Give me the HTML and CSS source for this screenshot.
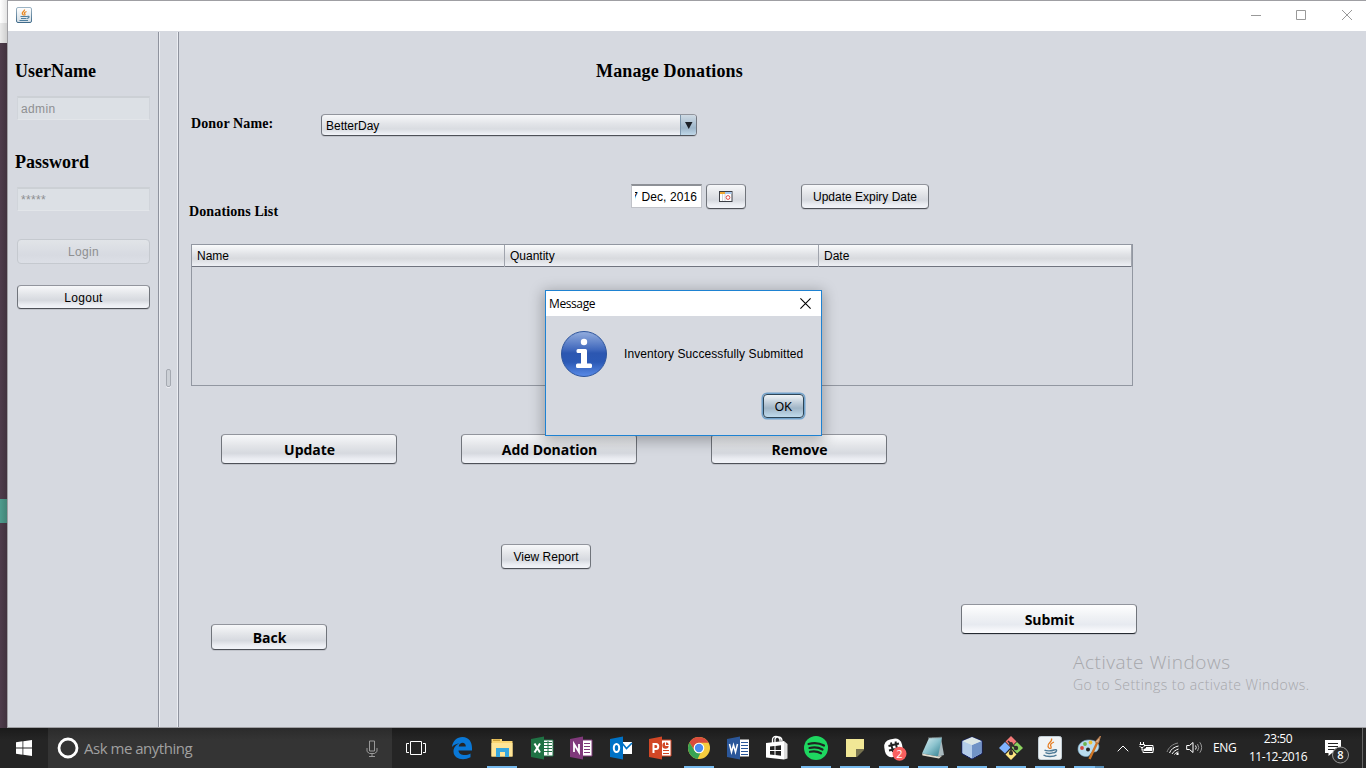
FILE: index.html
```html
<!DOCTYPE html>
<html lang="en">
<head>
<meta charset="utf-8">
<title>Manage Donations</title>
<link rel="stylesheet" href="styles.css">
</head>
<body>
<div class="desktop">
  <div class="behind"><i class="behind-top"></i><i class="behind-bar"></i><i class="behind-body"></i><i class="behind-accent"></i><i class="behind-body2"></i></div>
  <div class="window">
    <header class="titlebar">
      <svg class="java-small" width="16" height="16" viewBox="0 0 16 16"><defs><linearGradient id="jb" x2="0" y2="1"><stop stop-color="#9db4c4"/><stop offset="1" stop-color="#3f6a8a"/></linearGradient><linearGradient id="jf" x2="0" y2="1"><stop stop-color="#fff"/><stop offset="1" stop-color="#d3dde4"/></linearGradient></defs><rect x=".5" y=".5" width="15" height="15" rx="1.5" fill="url(#jf)" stroke="url(#jb)"/><path d="M8.5 2.5C9 4 6 5 6.300 6.500C6.500 7.500 7.500 7.500 7.500 8.500M10.500 4.500C8.500 5.200 8 6 8.800 7C9.200 7.500 9 8 8.500 8.500" fill="none" stroke="#e98a25" stroke-width="1.300"/><path d="M4.500 9.500H11M5 11.500H10.500M11 9.500C14 8.500 13.500 11 11 11.500M3.500 13.500H12" fill="none" stroke="#4f7f9f" stroke-width="1.200"/></svg>
      <div class="controls">
        <svg width="10" height="10" viewBox="0 0 10 10"><path d="M0 5.500H10"/></svg>
        <svg width="10" height="10" viewBox="0 0 10 10"><path d="M.5 .5H9.500V9.500H.5Z"/></svg>
        <svg width="10" height="10" viewBox="0 0 10 10"><path d="M0 0L10 10M10 0L0 10"/></svg>
      </div>
    </header>
    <div class="split">
      <aside class="sidebar">
        <label class="side-label">UserName</label>
        <div class="field user">admin</div>
        <label class="side-label pw">Password</label>
        <div class="field pass">*****</div>
        <div class="btn disabled login">Login</div>
        <div class="btn logout">Logout</div>
      </aside>
      <div class="divider"><i class="grip"></i></div>
      <main class="main">
        <h1 class="title">Manage Donations</h1>
        <div class="donor">
          <span class="form-label donor-label">Donor Name:</span>
          <div class="combo"><span class="combo-text">BetterDay</span><span class="combo-arrow"><svg width="8" height="7" viewBox="0 0 8 7"><path d="M0 0H7.500L3.750 7Z" fill="#1c2128"/></svg></span></div>
        </div>
        <div class="dates">
          <span class="form-label list-label">Donations List</span>
          <div class="date"><span>7 Dec, 2016</span></div>
          <div class="btn cal"><svg width="14" height="12" viewBox="0 0 14 12"><rect x=".5" y=".5" width="12.500" height="10" fill="#fff" stroke="#3c3f46"/><path d="M1 1H6V3H1Z" fill="#f0a830"/><path d="M6 1H12.500V3H6Z" fill="#a8c8ee"/><path d="M3.500 3V10M6 3V10" stroke="#d2d4da" fill="none"/><circle cx="9" cy="6.500" r="1.900" fill="#fff" stroke="#e44b48"/></svg></div>
          <div class="btn expiry">Update Expiry Date</div>
        </div>
        <div class="table"><div class="thead"><span>Name</span><span>Quantity</span><span>Date</span></div></div>
        <div class="actions">
          <div class="btn big b-update"><span>Update</span></div>
          <div class="btn big b-add"><span>Add Donation</span></div>
          <div class="btn big b-remove"><span>Remove</span></div>
        </div>
        <div class="btn report">View Report</div>
        <div class="bottom">
          <div class="btn big back"><span>Back</span></div>
          <div class="btn big submit"><span>Submit</span></div>
        </div>
      </main>
    </div>
  </div>
</div>

<div class="watermark"><div class="wm-title">Activate Windows</div><div class="wm-text">Go to Settings to activate Windows.</div></div>

<section class="dialog">
  <div class="dialog-bar"><span class="dialog-title">Message</span><svg width="11" height="11" viewBox="0 0 11 11"><path d="M.4 .4L10.600 10.600M10.600 .4L.4 10.600" stroke="#000" stroke-width="1.100"/></svg></div>
  <div class="dialog-body">
    <svg width="46" height="46" viewBox="0 0 46 46"><defs><linearGradient id="ig" x2="0" y2="1"><stop stop-color="#94aede"/><stop offset=".4" stop-color="#4169bd"/><stop offset=".48" stop-color="#2c57b1"/><stop offset=".68" stop-color="#2b59b5"/><stop offset="1" stop-color="#5a8be8"/></linearGradient></defs><circle cx="23" cy="23" r="22.500" fill="url(#ig)" stroke="#2e559c"/><circle cx="23" cy="11" r="3.200" fill="#fff"/><path d="M17 18H24.500Q26 18 26 19.500V32.500H29.500Q31 32.500 31 34V35.500Q31 37 29.500 37H16.500Q15 37 15 35.500V34Q15 32.500 16.500 32.500H20V22H17Q15.500 22 15.500 20.500V19.500Q15.500 18 17 18Z" fill="#fff"/></svg>
    <p class="dialog-msg">Inventory Successfully Submitted</p>
  </div>
  <div class="btn ok">OK</div>
</section>

<footer class="taskbar">
  <div class="start"><svg width="16" height="16" viewBox="0 0 16 16"><path d="M0 2.300L6.500 1.300V7.500H0ZM7.300 1.200L16 0V7.500H7.300ZM0 8.400H6.500V14.700L0 13.700ZM7.300 8.400H16V16L7.300 14.800Z" fill="#fff"/></svg></div>
  <div class="search"><svg width="22" height="22" viewBox="0 0 22 22"><circle cx="11" cy="11" r="9" fill="none" stroke="#fff" stroke-width="2.800"/></svg><span class="search-text">Ask me anything</span><svg class="mic" width="12" height="17" viewBox="0 0 12 17"><path d="M3.500 1H8.500V11H3.500ZM1 8V11.500L3.500 13.500H8.500L11 11.500V8M6 13.500V16.500M3 16.500H9" fill="none" stroke="#999"/></svg></div>
  <div class="taskview"><svg width="20" height="14" viewBox="0 0 20 14"><path d="M4.500 .5H15.500V13.500H4.500ZM3 2.500H.5V11.500H3M17 2.500H19.500V11.500H17" fill="none" stroke="#fff"/></svg></div>
  <div class="apps">
    <div class="app"><svg viewBox="0 0 26 26"><path d="M2 12C2.500 6 7 2 12.500 2C19 2 22 7 22 13V15.500H8.500C9 21 16.500 21 20.500 18.500V22.300C12.500 26.500 3.500 23.500 3.500 16.500C3.500 12.500 6 9.500 9.500 8.500C6.500 8.500 3.800 10 2 12ZM8.700 11.500H15.800C16 6.500 9.500 6.500 8.700 11.500Z" fill="#0a78d6"/></svg></div>
    <div class="app open gap"><svg viewBox="0 0 26 26"><path d="M2.500 4H13V6H23.500V21.500H2.500Z" fill="#fbd672"/><path d="M4 4.500H11V6H4Z" fill="#c99e39"/><path d="M2.500 8H23.500V21.500H2.500Z" fill="#ffe597"/><path d="M7 13H20V22H16V17H11V22H7Z" fill="#37a7df"/></svg></div>
    <div class="app"><svg viewBox="0 0 26 26"><path d="M13 5H24V21H13Z" fill="#fff" stroke="#217346"/><path d="M15 7.500H23M15 10.500H23M15 13.500H23M15 16.500H23M19 6V20" stroke="#217346"/><path d="M2 4L15 1.500V24.500L2 22Z" fill="#1f7244"/><path d="M5.500 8.500L11 17.500M11 8.500L5.500 17.500" stroke="#fff" stroke-width="2"/></svg></div>
    <div class="app gap"><svg viewBox="0 0 26 26"><path d="M14 5H24V21H14Z" fill="#fff" stroke="#80397b"/><path d="M16 8.500H22M16 11.500H22M16 14.500H22M16 17.500H22" stroke="#80397b"/><path d="M2 4L15 1.500V24.500L2 22Z" fill="#80397b"/><path d="M6 17V9L11 17V9" fill="none" stroke="#fff" stroke-width="1.800"/></svg></div>
    <div class="app"><svg viewBox="0 0 26 26"><path d="M14 7H24V19H14Z" fill="#fff"/><path d="M14 8L18.500 13.500L24 8" fill="none" stroke="#0072c6" stroke-width="1.600"/><path d="M2 4L15 1.500V24.500L2 22Z" fill="#0072c6"/><ellipse cx="8.500" cy="13" rx="2.700" ry="4" fill="none" stroke="#fff" stroke-width="2"/></svg></div>
    <div class="app"><svg viewBox="0 0 26 26"><path d="M14 5H24V21H14Z" fill="#fff" stroke="#d24726"/><circle cx="18.500" cy="10.500" r="3.200" fill="#d24726"/><path d="M18.500 10.500V7M18.500 10.500H22" stroke="#fff"/><path d="M16 15.500H22M16 18.500H22" stroke="#d24726"/><path d="M2 4L15 1.500V24.500L2 22Z" fill="#d24726"/><path d="M6.500 18V9H9C12 9 12 14 9 14H6.500" fill="none" stroke="#fff" stroke-width="2"/></svg></div>
    <div class="app open"><svg viewBox="0 0 26 26"><circle cx="13" cy="13" r="11" fill="#f5cc3e"/><path d="M3.500 7.500A11 11 0 0 1 22.600 7.700H13A5.300 5.300 0 0 0 8.400 15.600Z" fill="#d94c3d"/><path d="M3.500 7.500L8.400 15.600A5.300 5.300 0 0 0 14.500 18L11.500 23.900A11 11 0 0 1 3.500 7.500Z" fill="#37a254"/><circle cx="13" cy="13" r="5.300" fill="#fff"/><circle cx="13" cy="13" r="4.200" fill="#4a8bf0"/></svg></div>
    <div class="app"><svg viewBox="0 0 26 26"><path d="M14 4.500H24V21.500H14Z" fill="#fff"/><path d="M16 7.500H23M16 10.500H23M16 13.500H23M16 16.500H23M16 19.500H23" stroke="#2b579a"/><path d="M2 4L15 1.500V24.500L2 22Z" fill="#2b579a"/><path d="M4.500 9L6.500 17L8.500 10L10.500 17L12.500 9" fill="none" stroke="#fff" stroke-width="1.500"/></svg></div>
    <div class="app"><svg viewBox="0 0 26 26"><path d="M8.500 8V4.500C8.500 .5 15 .5 16 4.500V6.500M11 7V4C12 1 18 1 18 6" fill="none" stroke="#fff" stroke-width="1.300"/><path d="M2 8L20 6V24.500L2 22.500Z" fill="#fff"/><path d="M20 6L23.500 9V23.500L20 24.500Z" fill="#ddd"/><path d="M6 11.500L10.500 11V15H6ZM11.500 10.900L17 10.300V15H11.500ZM6 16H10.500V20L6 19.500ZM11.500 16H17V20.800L11.500 20.100Z" fill="#222"/></svg></div>
    <div class="app open"><svg viewBox="0 0 26 26"><circle cx="13" cy="13" r="12" fill="#1ed760"/><path d="M5.500 9C10.500 7.500 16.500 8 21 10.500M6.500 13C11 11.800 15.500 12.200 19.500 14.500M7 16.800C11 15.800 14.500 16.200 18 18.300" fill="none" stroke="#202422" stroke-width="2.200" stroke-linecap="round"/></svg></div>
    <div class="app open"><svg viewBox="0 0 26 26"><path d="M4 4H22V14L14 22H4Z" fill="#f1e796"/><path d="M14 14H22V15L15 22H14Z" fill="#777350"/></svg></div>
    <div class="app open"><svg viewBox="0 0 26 26"><rect x="3.500" y="4" width="18" height="18" rx="7" fill="#fff" transform="rotate(-10 12 13)"/><path d="M10 7.500L12 17M14.500 6.500L16 14M7.500 11L18 8.500M8 15.500L15 14" stroke="#222" stroke-width="2"/><circle cx="18.500" cy="18.800" r="7" fill="#f9605f"/><text x="18.500" y="23" text-anchor="middle" class="badge-text">2</text></svg></div>
    <div class="app open"><svg viewBox="0 0 26 26"><defs><linearGradient id="np" x2="1" y2="1"><stop stop-color="#dff0f3"/><stop offset=".5" stop-color="#8cc3ce"/><stop offset="1" stop-color="#2e7c8c"/></linearGradient></defs><path d="M21 3L24 20L17 22Z" fill="#a8b8bd"/><path d="M9 3L22 2.500L18 21.500L2 18.500Z" fill="url(#np)"/><path d="M2 18.500L18 21.500L22 21L19 23.500L2.500 20.500Z" fill="#dfdccf"/><path d="M8.500 3L22 2.500" stroke="#8f9b9d" stroke-width="1.500" stroke-dasharray="1 1"/></svg></div>
    <div class="app open"><svg viewBox="0 0 26 26"><path d="M13 2L23 6V18.500L13 24L3 18.500V6Z" fill="#c8d8ed" stroke="#101e69"/><path d="M3.500 6L13 10V23.500L3.500 18Z" fill="#b4cce9"/><path d="M22.500 6L13 10V23.500L22.500 18Z" fill="#7193c6"/><path d="M3.500 6L13 2L22.500 6L13 10Z" fill="#dce6e5"/></svg></div>
    <div class="app open"><svg viewBox="0 0 26 26"><path d="M13 1L18.500 6.500L13 12L7.500 6.500Z" fill="#f37978"/><path d="M7 7L12.500 12.500L7 18.500L1 13Z" fill="#80b3ff"/><path d="M19 7L25 13L19 18.500L13.500 12.500Z" fill="#8dd35f"/><path d="M13 14L18.500 19.500L13 25L7.500 19.500Z" fill="#ffe680"/><path d="M10 6L13 9V18M13 9L18 13" fill="none" stroke="#332f2c" stroke-width="1.700"/><circle cx="13" cy="9" r="2" fill="#332f2c"/><circle cx="13" cy="18" r="2.200" fill="#332f2c"/><circle cx="18" cy="13" r="2.200" fill="#332f2c"/></svg></div>
    <div class="app open"><svg viewBox="0 0 26 26"><rect x="1.500" y="1.500" width="23" height="23" rx="2" fill="#eff3f5" stroke="#c1ccd3"/><path d="M14.500 3.500C16 7 10 8 11 11.500C11.300 12.500 12.500 13 12.500 14M17 7C13.500 8.500 13 9.500 14 11.500C14.500 12.500 14 13 13.500 14" fill="none" stroke="#e67c20" stroke-width="1.300"/><path d="M7.500 15C9 16.300 15 16 17 15M8.500 17.500C10 19 15 18.500 16.500 17.500M17 15C21 13.500 20 17.500 16.500 18M6.500 20C9 22 17 22 19.500 20" fill="none" stroke="#4b7895" stroke-width="1.400"/></svg></div>
    <div class="app open multi"><svg viewBox="0 0 26 26"><path d="M2 14C2 8 8 4.500 14 5C22 5.500 25 11 21.500 15.500C19.500 18 17 16 15 18C13.500 20 13 22 9.500 21.500C5 21 2 18 2 14Z" fill="#b9dcee" stroke="#7ba9c6" stroke-width=".6"/><circle cx="6" cy="13" r="1.900" fill="#d8473e"/><circle cx="9" cy="9" r="1.900" fill="#6cb34e"/><circle cx="14.500" cy="7.500" r="1.900" fill="#ebbf35"/><circle cx="12" cy="14.500" r="2" fill="#222"/><path d="M22 6L13.500 24" stroke="#ce7525" stroke-width="2.400"/><path d="M24.500 1L19 7L22.500 8Z" fill="#dbb08a" stroke="#ba7d4e"/></svg></div>
  </div>
  <div class="tray">
    <svg class="t-up" width="12" height="7" viewBox="0 0 12 7"><path d="M.7 6.300L6 1L11.300 6.300"/></svg>
    <svg class="t-bat" width="16" height="12" viewBox="0 0 16 12"><path d="M5.500 3.500H14V10.500H4V7"/><path d="M7 5H13V9H5V7L7 6Z" fill="#fff" stroke="none"/><path d="M14.500 5.500V8.500M1.500 0V2M4.500 0V2M.5 2.500H5.500V4L4 5.500H2L.5 4M3 5.500V8.500"/></svg>
    <svg class="t-wifi" width="13" height="13" viewBox="0 0 13 13"><path d="M1 10C2.500 5.500 6.500 2 12 1" stroke="#888"/><path d="M3.500 11C5 7 8 5 12.500 4M6 12C7.500 9.500 9.500 8 12.500 7M8.500 12.500C9.500 11 11 10 12.500 10"/><circle cx="11.500" cy="12" r="1.200" fill="#fff" stroke="none"/></svg>
    <svg class="t-vol" width="17" height="13" viewBox="0 0 17 13"><path d="M.7 4.500H3.500L7 1.500V11.500L3.500 8.500H.7ZM9.500 4.500Q11 6.500 9.500 8.500"/><path d="M11.500 3Q14 6.500 11.500 10M13.800 1.300Q17.500 6.500 13.800 11.700" stroke="#999"/></svg>
    <span class="lang">ENG</span>
    <div class="clock"><span class="time">23:50</span><span class="day">11-12-2016</span></div>
    <svg class="t-note" width="25" height="25" viewBox="0 0 25 25"><path d="M1 1H17V14H8L4.500 17V14H1Z" fill="#fff" stroke="none"/><path d="M4 4.500H14M4 7.500H14M4 10.500H11" stroke="#222"/><circle cx="16.500" cy="16" r="8" fill="#2c2c2c" stroke="#999"/><text x="16.500" y="20.300" text-anchor="middle" class="note-count">8</text></svg>
  </div>
</footer>
</body>
</html>
```
FILE: styles.css
```css
* { box-sizing: border-box; }
body { margin: 0; width: 1366px; height: 768px; overflow: hidden; display: flex; flex-direction: column; position: relative; font: 12px/15px "Liberation Sans", Arial, sans-serif; color: #000; background: #222; }
svg { display: block; flex: none; }
.desktop { height: 728px; display: flex; background: #4a3947; }
.behind { width: 7px; display: flex; flex-direction: column; }
.behind-top { height: 23px; background: linear-gradient(90deg, #fff, #e4e4e4); }
.behind-bar { height: 20px; background: linear-gradient(90deg, #ebebeb, #cfcfcf); }
.behind-body { height: 456px; background: linear-gradient(90deg, #4e3c4b, #41323e); }
.behind-accent { height: 24px; background: linear-gradient(90deg, #4e9c8e, #438477); }
.behind-body2 { flex: 1; background: linear-gradient(90deg, #4e3c4b, #41323e); }
.window { flex: 1; border: solid #9f9fa3; border-width: 1px 0 1px 1px; display: flex; flex-direction: column; background: #d6d9e0; }
.titlebar { height: 30px; background: #fff; display: flex; justify-content: space-between; padding: 6px 14px 0 8px; }
.controls { display: flex; gap: 35px; padding-top: 3px; }
.controls svg { fill: none; stroke: #999; }
.controls svg:nth-child(3) { margin-left: 1px; }
.split { flex: 1; display: flex; }
.sidebar { width: 151px; margin-top: 1px; border-right: 1px solid #8f939e; padding: 29px 7px 0; display: flex; flex-direction: column; }
.side-label { font: bold 18px/20px "Liberation Serif", "Times New Roman", serif; }
.field { height: 24px; width: 133px; margin: 15px 0 0 2px; padding: 0 3px; color: #8e8f91; background: #dce0e5; border: 1px solid #d0d4da; border-top: 2px solid #ccd0d5; border-bottom-color: #e2e5e9; line-height: 22px; letter-spacing: .35px; }
.side-label.pw { margin-top: 32px; }
.field.pass { letter-spacing: .3px; }
.btn { display: flex; align-items: center; justify-content: center; height: 25px; padding-top: 1px; border: 1px solid #70747b; border-top-color: #92959d; border-bottom-color: #4e5158; border-radius: 4px; background: linear-gradient(#f7f8fa 0%, #e2e4e8 40%, #d6d9df 65%, #ebedf2 85%, #f2f4f9 100%); box-shadow: 0 1px 0 #c1c4cb; white-space: nowrap; }
.disabled { color: #8e8f91; border-color: #c5c9cf; background: linear-gradient(#e1e4e8, #d7dae1 65%, #dcdfe6); box-shadow: none; }
.login { margin: 28px 0 0 2px; width: 133px; padding-top: 2px; letter-spacing: .3px; }
.logout { margin: 21px 0 0 2px; width: 133px; height: 24px; padding-top: 2px; letter-spacing: .3px; }
.divider { width: 20px; margin-top: 1px; border: solid #eceef3; border-width: 0 1px; border-right: 1px solid #8f939e; box-shadow: inset -1px 0 #eceef3; padding: 337px 0 0 6px; }
.grip { display: block; width: 5px; height: 18px; border: 1px solid #a5a9b1; border-radius: 2px; background: #ccd0d6; box-shadow: 0 1px #eceef3; }
.main { flex: 1; display: flex; flex-direction: column; align-items: flex-start; }
.title { margin: 30px 0 0 417px; height: 20px; font: bold 18px/20px "Liberation Serif", "Times New Roman", serif; letter-spacing: .15px; }
.donor { display: flex; height: 22px; margin: 33px 0 0 12px; }
.form-label { font: bold 14px/20px "Liberation Serif", "Times New Roman", serif; letter-spacing: .12px; }
.donor-label { width: 130px; }
.combo { width: 376px; height: 22px; display: flex; align-items: stretch; border: 1px solid #737780; border-top-color: #92959d; border-bottom-color: #4e5158; border-radius: 4px; background: linear-gradient(#f7f8fa, #e2e4e8 45%, #d9dce1 70%, #f2f4f9); box-shadow: 0 1px #c1c4cb; overflow: hidden; }
.combo-text { flex: 1; padding-left: 4px; line-height: 22px; }
.combo-arrow { width: 16px; border-left: 1px solid #7d97ad; background: linear-gradient(#cfdbe5, #a9bed0 50%, #9db5c9 65%, #c0d8e9); padding: 7px 0 0 4px; }
.dates { display: flex; height: 36px; margin: 48px 0 0 10px; }
.list-label { width: 442px; padding-top: 18px; }
.date { width: 71px; height: 24px; border: 1px solid #c0c2c8; border-top: 2px solid #8d9096; background: #fff; display: flex; padding: 0 4px 0 3px; line-height: 23px; }
.date span { width: 63px; overflow: hidden; white-space: nowrap; display: flex; justify-content: flex-end; letter-spacing: .1px; }
.cal { width: 40px; margin-left: 4px; padding-top: 0; }
.expiry { width: 128px; margin-left: 55px; }
.table { width: 942px; height: 142px; margin: 24px 0 0 12px; border: 1px solid #9297a1; }
.thead { height: 22px; display: grid; grid-template-columns: 313px 314px 1fr; border-bottom: 1px solid #70747f; background: linear-gradient(#fafbfc, #e0e2e6 45%, #d8dade 65%, #eef0f5); }
.thead span { border-right: 1px solid #a0a4ad; padding-left: 5px; line-height: 22px; }
.actions { display: flex; margin: 48px 0 0 42px; }
.big { height: 30px; width: 176px; padding: 2px 0 0 1px; font: bold 14px/20px "Open Sans", "Noto Sans", sans-serif; }
.big span { letter-spacing: -.05px; }
.b-add { margin-left: 64px; }
.b-remove { margin-left: 74px; }
.report { width: 90px; margin: 80px 0 0 322px; }
.bottom { display: flex; margin: 35px 0 0 32px; align-items: flex-start; }
.back { width: 116px; height: 26px; margin-top: 20px; }
.submit { margin-left: 634px; border-bottom-color: #252a31; background: linear-gradient(#fff, #f0f2f5 40%, #e7eaf0 70%, #fdfdff); }
.watermark { position: absolute; left: 1073px; top: 651px; color: #a6a7ab; font-family: "Open Sans", "Noto Sans", sans-serif; font-weight: 300; white-space: nowrap; }
.wm-title { font-size: 19px; line-height: 23px; letter-spacing: .53px; }
.wm-text { font-size: 14px; line-height: 21px; letter-spacing: .45px; }
.dialog { position: absolute; left: 545px; top: 290px; width: 277px; height: 146px; border: 1px solid #1e82d2; background: #d6d9e0; box-shadow: 0 3px 13px 2px rgba(0,0,0,.28); display: flex; flex-direction: column; }
.dialog-bar { height: 25px; background: #fff; display: flex; justify-content: space-between; padding: 7px 10px 0 3px; }
.dialog-title { font: 12px/12px "Open Sans", "Noto Sans", sans-serif; letter-spacing: -.4px; }
.dialog-body { display: flex; padding: 15px 0 0 15px; }
.dialog-msg { margin: 16px 0 0 17px; letter-spacing: .08px; white-space: nowrap; }
.ok { align-self: flex-end; width: 41px; height: 24px; margin: 17px 17px 0 0; padding-top: 2px; border-color: #2d4557; background: linear-gradient(#f0f4f7, #bac9d6 40%, #a0b5c6 60%, #c0dbed); box-shadow: 0 0 0 1.500px #71a2cb; }
.taskbar { height: 40px; display: flex; background: linear-gradient(#1b1b1b, #252525 30%); color: #fff; font-family: "Open Sans", "Noto Sans", sans-serif; }
.start { flex: none; width: 48px; padding: 12px 0 0 16px; }
.search { flex: none; width: 344px; display: flex; align-items: center; background: linear-gradient(#2b2b2b, #343434 30%); padding: 0 14px 0 9px; }
.search-text { flex: 1; margin-left: 5px; font-size: 15px; line-height: 20px; color: #a0a0a0; padding-bottom: 1px; letter-spacing: -.48px; }
.taskview { flex: none; width: 51.500px; padding: 13px 0 0 14px; }
.apps { display: flex; flex: none; }
.app { flex: none; width: 39px; height: 40px; padding-top: 7px; display: flex; flex-direction: column; justify-content: space-between; align-items: center; }
.app svg { width: 26px; height: 26px; }
.app.gap { margin-right: 1px; }
.open::after { content: ""; width: 30px; height: 2px; flex: none; background: #76b9ed; }
.multi::after { background: linear-gradient(90deg, #76b9ed 21px, #568cb5 21px); }
.badge-text { font: 11px "Open Sans", sans-serif; fill: #fff; }
.tray { flex: 1; min-width: 0; display: flex; padding-left: 8.500px; border-right: 3px solid #272727; box-shadow: inset -1px 0 #666; }
.tray svg { fill: none; stroke: #fff; }
.t-up { margin-top: 17px; }
.t-bat { margin: 14px 0 0 10px; }
.t-wifi { margin: 14px 0 0 11px; }
.t-vol { margin: 13px 0 0 7px; }
.lang { flex: none; width: 24px; margin: 12px 0 0 10px; font-size: 12px; line-height: 16px; letter-spacing: -.3px; }
.clock { flex: none; width: 60px; margin-left: 11px; display: flex; flex-direction: column; align-items: center; font-size: 12px; line-height: 18px; padding-top: 2px; letter-spacing: -.45px; white-space: nowrap; }
.t-note { margin: 11px 0 0 16px; }
.note-count { font: 600 11px "Open Sans", sans-serif; fill: #fff; stroke: none; }
```
